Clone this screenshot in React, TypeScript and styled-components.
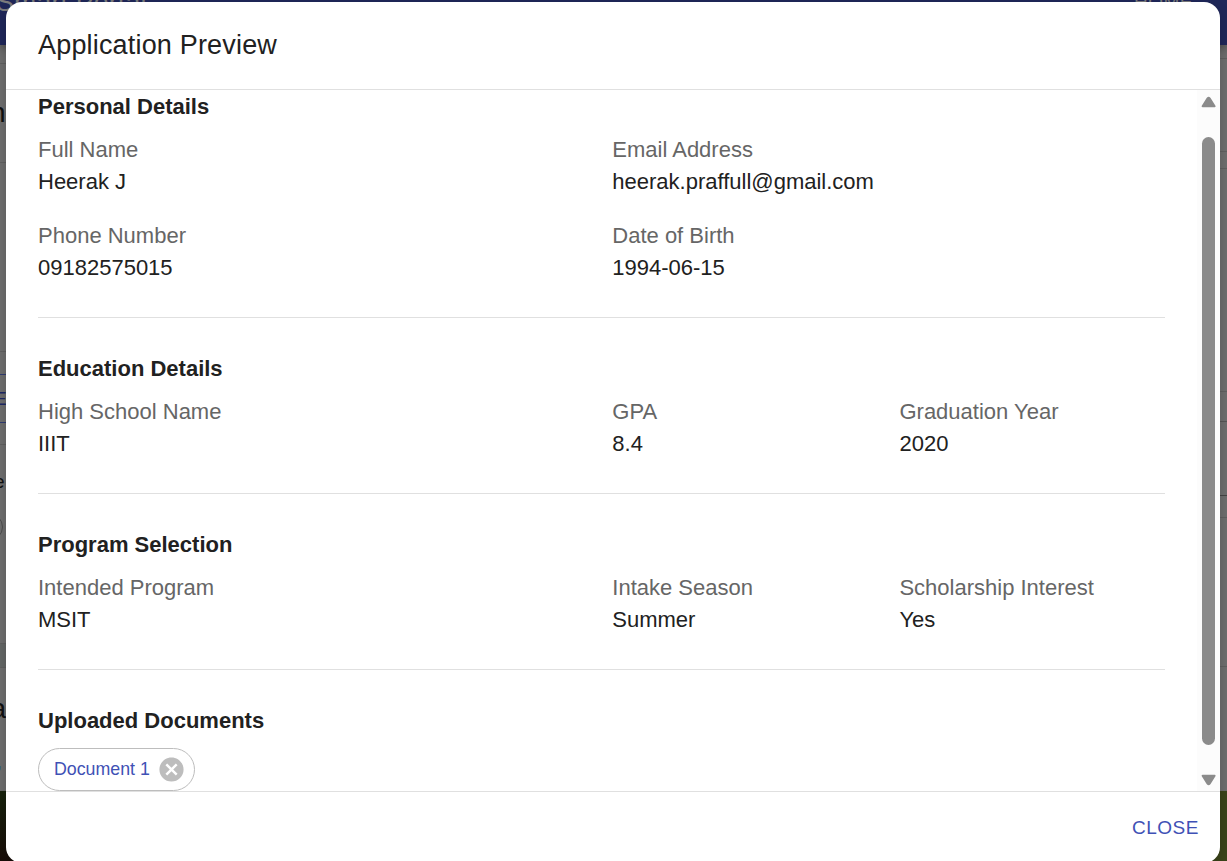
import React from "react";
import styled, { createGlobalStyle } from "styled-components";

const GlobalStyle = createGlobalStyle`
  * { box-sizing: border-box; }
  html, body { margin: 0; height: 100%; overflow: hidden; }
  body { font-family: "Liberation Sans", Arial, sans-serif; color: #212121; }
`;

const Page = styled.div`
  position: relative;
  width: 1227px;
  height: 861px;
  overflow: hidden;
  background:
    linear-gradient(90deg, transparent 50%, #3b441a 50%),
    linear-gradient(180deg, #17220c 791px, #180d08 861px);
`;

const AppBar = styled.header`
  display: flex;
  justify-content: space-between;
  height: 45px;
  overflow: hidden;
  background: #1f2759;
  color: #7c7c7c;
  box-shadow: 0 3px 8px rgba(0, 0, 0, 0.3);
  position: relative;
  z-index: 1;
`;

const Brand = styled.span`
  margin: -14px 0 0 -4px;
  font-size: 26.67px;
  line-height: 32px;
  letter-spacing: 0.2px;
`;

const NavItem = styled.span`
  margin: -14px 34px 0 0;
  font-size: 19px;
  line-height: 32px;
  letter-spacing: 0.53px;
`;

const Sheet = styled.div`
  display: flex;
  justify-content: space-between;
  height: 746px;
  background: #6e6e6e;
`;

const Gutter = styled.div`
  display: flex;
  flex-direction: column;
  width: 7px;
  overflow: hidden;
`;

const Band = styled.div<{ $h: number; $line?: string; $fill?: string }>`
  flex: none;
  height: ${(p) => p.$h}px;
  border-bottom: 1px solid ${(p) => p.$line ?? "#606060"};
  background: ${(p) => p.$fill ?? "transparent"};
  overflow: hidden;
`;

const Glyph = styled.div<{ $top: number; $size: number; $shift: number; $color?: string }>`
  margin: ${(p) => p.$top}px 0 0 ${(p) => p.$shift}px;
  height: ${(p) => p.$size}px;
  font-size: ${(p) => p.$size}px;
  line-height: ${(p) => p.$size}px;
  color: ${(p) => p.$color ?? "#101010"};
`;

const Ring = styled.div`
  width: 28px;
  height: 28px;
  margin: 22px 0 0 -25px;
  border: 1px solid #4c4c4c;
  border-radius: 14px;
`;

const Dialog = styled.section`
  position: absolute;
  z-index: 2;
  left: 6px;
  top: 2px;
  width: 1214px;
  height: 861px;
  display: flex;
  flex-direction: column;
  overflow: hidden;
  background: #fff;
  border-radius: 16px;
  box-shadow: 0 4px 12px rgba(0, 0, 0, 0.2);
`;

const Title = styled.h2`
  flex: none;
  height: 87px;
  margin: 0;
  padding: 22px 32px;
  font-size: 27px;
  font-weight: 400;
  line-height: 43px;
  letter-spacing: 0.18px;
`;

const Body = styled.div`
  flex: none;
  display: flex;
  height: 703px;
  border-top: 1px solid #e0e0e0;
  border-bottom: 1px solid #e0e0e0;
  overflow: hidden;
`;

const Content = styled.div`
  flex: 1;
  padding: 0 32px;
  margin-top: -1px;
`;

const Section = styled.section`
  & + & {
    margin-top: 33px;
    border-top: 1px solid #e0e0e0;
    padding-top: 33px;
  }
`;

const Heading = styled.h3`
  margin: 0 0 10px;
  font-size: 22px;
  font-weight: 700;
  line-height: 35px;
`;

const Fields = styled.div`
  display: grid;
  grid-template-columns: 2fr 1fr 1fr;
  row-gap: 22px;
  margin-right: -21.6px;
`;

const Field = styled.div<{ $wide?: boolean }>`
  grid-column: span ${(p) => (p.$wide ? 2 : 1)};
  font-size: 22px;
  line-height: 32px;
`;

const Label = styled.div`
  color: #666;
`;

const Chip = styled.div`
  display: flex;
  align-items: center;
  width: fit-content;
  height: 43px;
  padding: 0 8px 0 15px;
  border: 1px solid #bdbdbd;
  border-radius: 22px;
  color: #3f51b5;
  font-size: 17.8px;

  svg { margin-left: 7px; }
`;

const ScrollTrack = styled.div`
  display: flex;
  flex-direction: column;
  align-items: center;
  justify-content: space-between;
  width: 23px;
  padding: 6px 0 5px;
  background: #fcfcfc;
`;

const Thumb = styled.div`
  width: 13px;
  height: 608px;
  margin-bottom: 1px;
  border-radius: 7px;
  background: #8b8b8b;
`;

const Footer = styled.footer`
  flex: 1;
  display: flex;
  justify-content: flex-end;
  padding: 20px 21px 0;
`;

const CloseButton = styled.button`
  height: 32px;
  padding: 0;
  border: 0;
  background: none;
  color: #3f51b5;
  font: 400 19px/32px "Liberation Sans", Arial, sans-serif;
  letter-spacing: 0.53px;
`;

type Entry = { label: string; value: string; wide?: boolean };

const sections: { title: string; entries: Entry[] }[] = [
  {
    title: "Personal Details",
    entries: [
      { label: "Full Name", value: "Heerak J" },
      { label: "Email Address", value: "heerak.praffull@gmail.com", wide: true },
      { label: "Phone Number", value: "09182575015" },
      { label: "Date of Birth", value: "1994-06-15", wide: true },
    ],
  },
  {
    title: "Education Details",
    entries: [
      { label: "High School Name", value: "IIIT" },
      { label: "GPA", value: "8.4" },
      { label: "Graduation Year", value: "2020" },
    ],
  },
  {
    title: "Program Selection",
    entries: [
      { label: "Intended Program", value: "MSIT" },
      { label: "Intake Season", value: "Summer" },
      { label: "Scholarship Interest", value: "Yes" },
    ],
  },
];

const Arrow = ({ down = false }: { down?: boolean }) => (
  <svg width="16" height="12" viewBox="0 0 16 12">
    <path
      d={down ? "M1.6 1.8H13.6L8.6 9.6Q7.6 10.8 6.6 9.6Z" : "M1.6 10.2H13.6L8.6 2.4Q7.6 1.2 6.6 2.4Z"}
      fill="#8b8b8b"
      stroke="#8b8b8b"
      strokeWidth="2"
      strokeLinejoin="round"
    />
  </svg>
);

export default function App() {
  return (
    <>
      <GlobalStyle />
      <Page>
        <AppBar>
          <Brand>Smart Portal</Brand>
          <NavItem>HOME</NavItem>
        </AppBar>
        <Sheet>
          <Gutter>
            <Band $h={19} />
            <Band $h={99}><Glyph $top={35} $size={28} $shift={-10}>n</Glyph></Band>
            <Band $h={189} />
            <Band $h={23} $line="#303b72" />
            <Band $h={48} $line="#303b72">
              <Glyph $top={14} $size={19} $shift={-6} $color="#1d2866">E</Glyph>
            </Band>
            <Band $h={22} />
            <Band $h={199}>
              <Glyph $top={27} $size={19} $shift={-6}>e</Glyph>
              <Ring />
            </Band>
            <Band $h={24} $fill="#646766" />
            <Band $h={123} $line="#6a6a6a">
              <Glyph $top={28} $size={27} $shift={-9}>a</Glyph>
              <Glyph $top={30} $size={18} $shift={-3} $color="#2a5a94">,</Glyph>
            </Band>
          </Gutter>
          <Gutter>
            <Band $h={14} />
            <Band $h={93} />
            <Band $h={17} />
            <Band $h={223} />
            <Band $h={30} $line="#555" />
            <Band $h={74} $line="#444" />
            <Band $h={22} />
            <Band $h={149} />
          </Gutter>
        </Sheet>
        <Dialog>
          <Title>Application Preview</Title>
          <Body>
            <Content>
              {sections.map((s) => (
                <Section key={s.title}>
                  <Heading>{s.title}</Heading>
                  <Fields>
                    {s.entries.map((e) => (
                      <Field key={e.label} $wide={e.wide}>
                        <Label>{e.label}</Label>
                        {e.value}
                      </Field>
                    ))}
                  </Fields>
                </Section>
              ))}
              <Section>
                <Heading>Uploaded Documents</Heading>
                <Chip>
                  Document 1
                  <svg width="29" height="29" viewBox="0 0 24 24" fill="#bdbdbd">
                    <path d="M12 2C6.47 2 2 6.47 2 12s4.47 10 10 10 10-4.47 10-10S17.53 2 12 2zm5 13.59L15.59 17 12 13.41 8.41 17 7 15.59 10.59 12 7 8.41 8.41 7 12 10.59 15.59 7 17 8.41 13.41 12 17 15.59z" />
                  </svg>
                </Chip>
              </Section>
            </Content>
            <ScrollTrack>
              <Arrow />
              <Thumb />
              <Arrow down />
            </ScrollTrack>
          </Body>
          <Footer>
            <CloseButton>CLOSE</CloseButton>
          </Footer>
        </Dialog>
      </Page>
    </>
  );
}
